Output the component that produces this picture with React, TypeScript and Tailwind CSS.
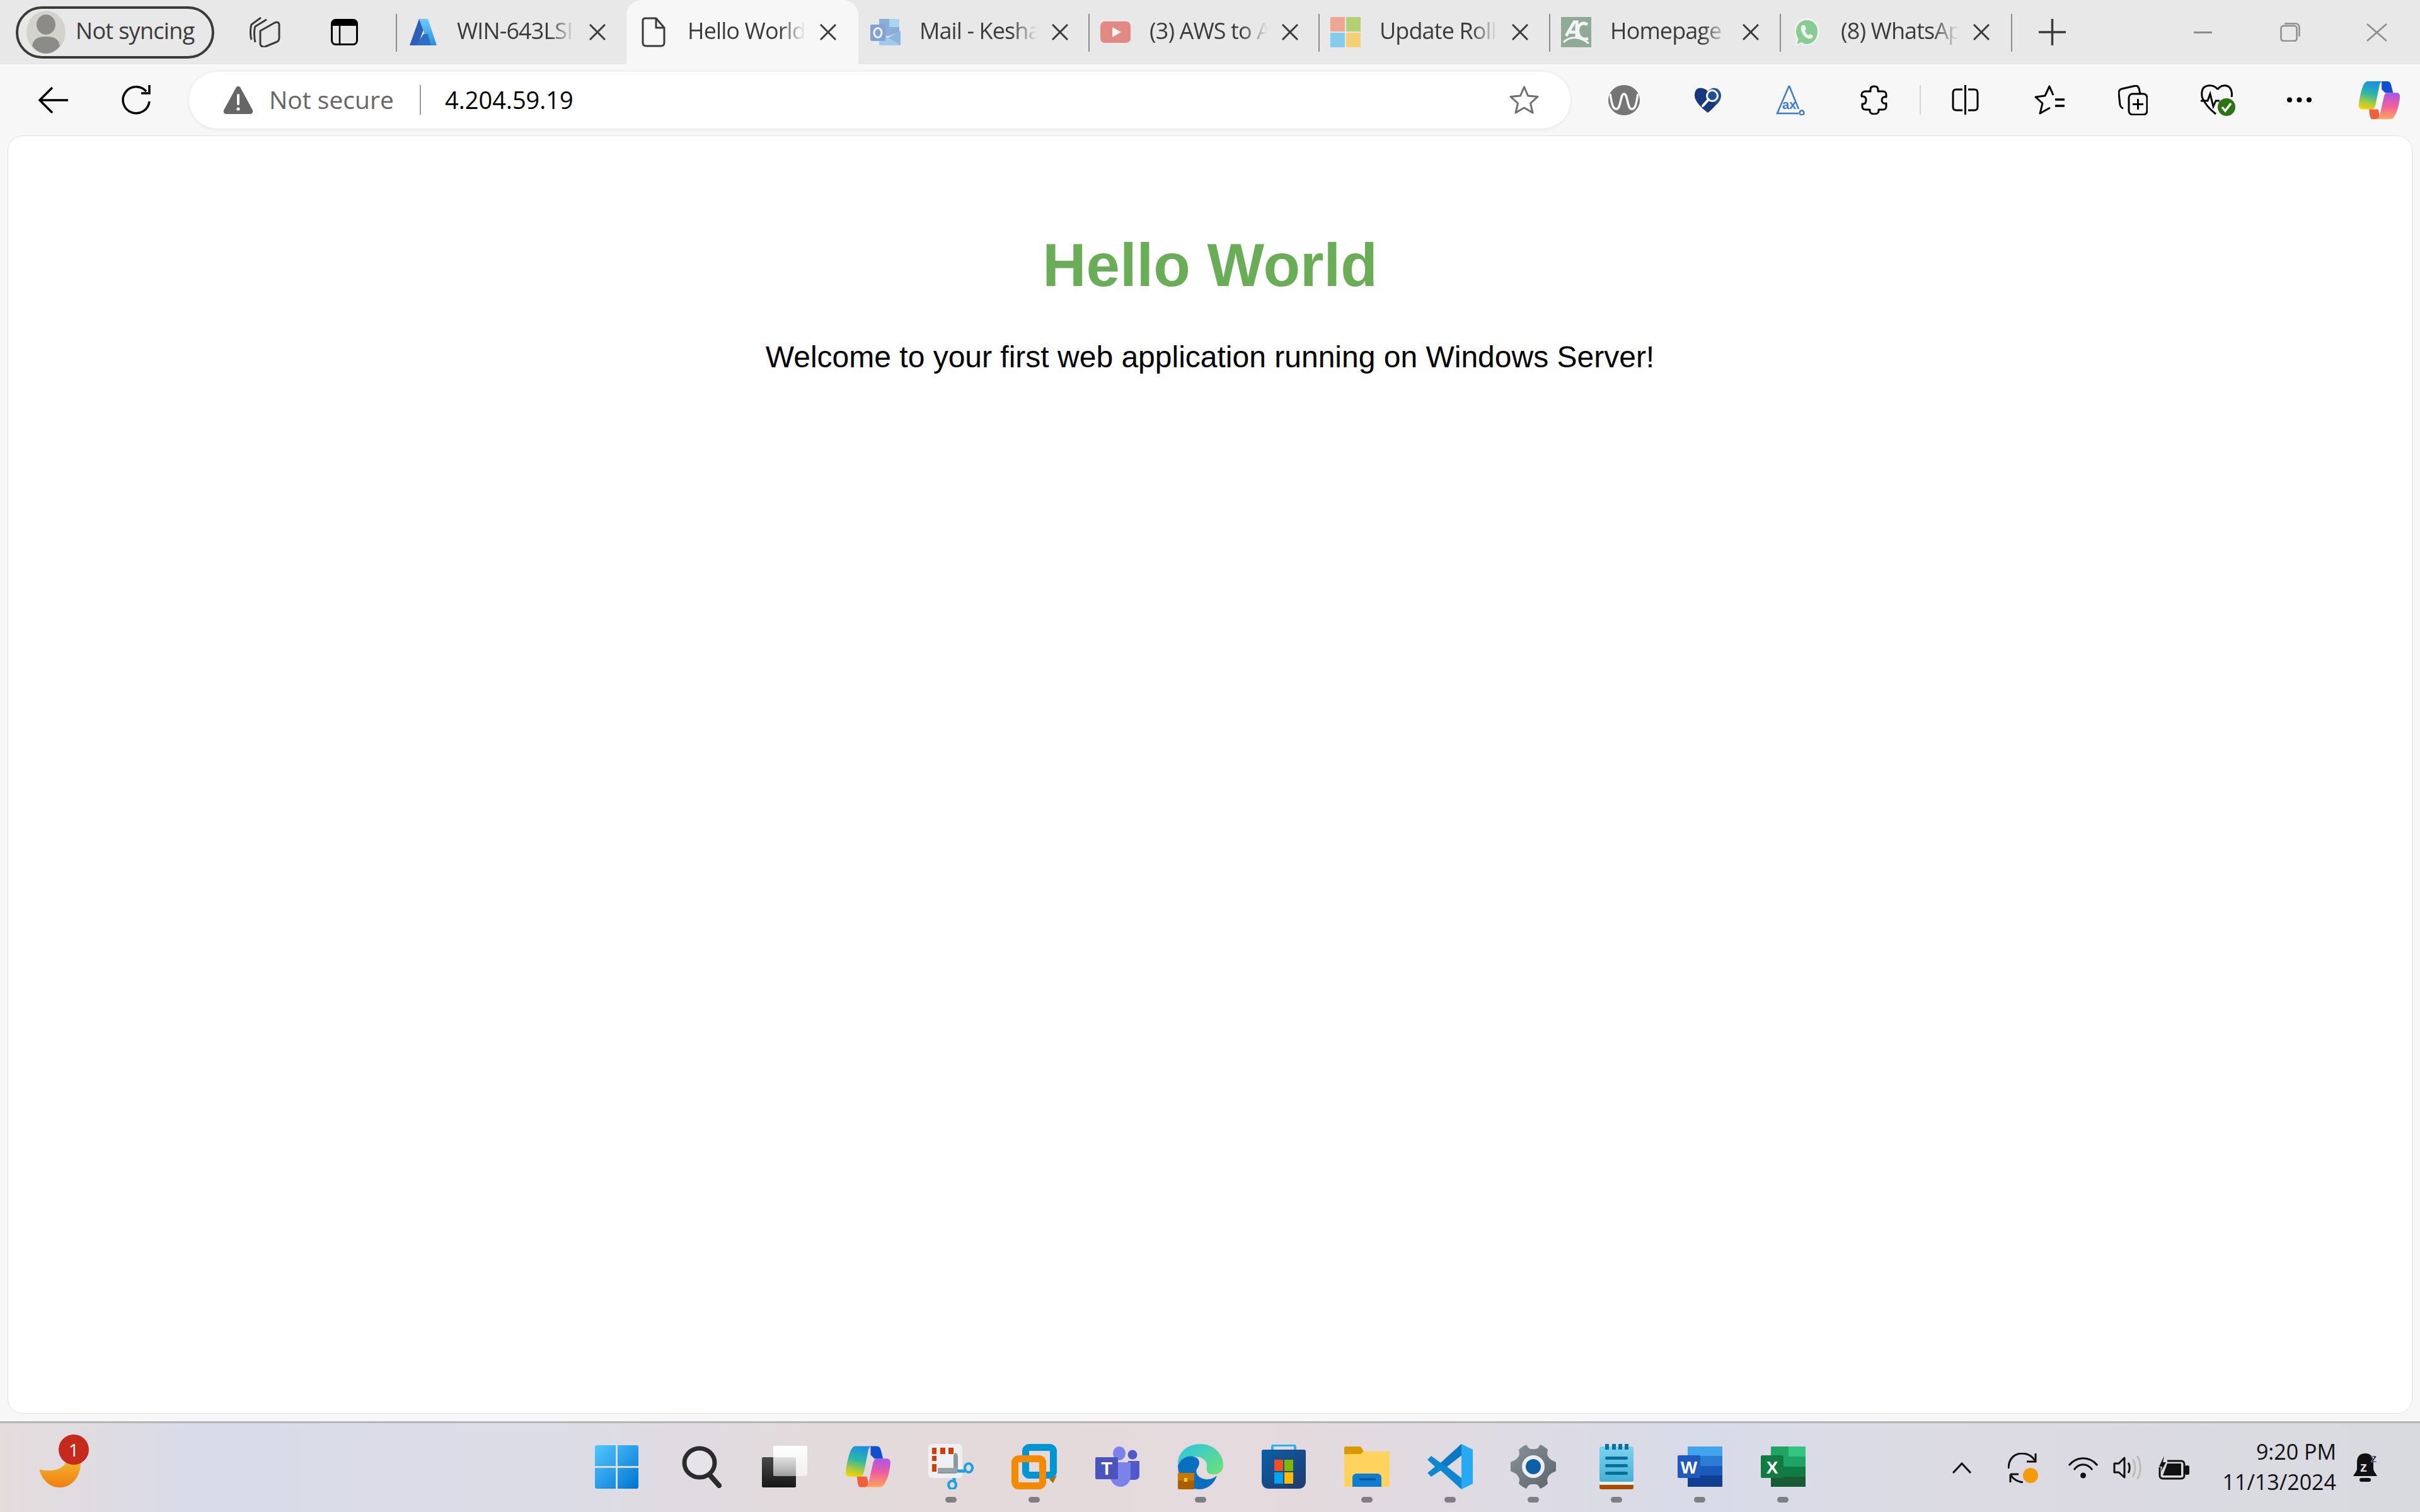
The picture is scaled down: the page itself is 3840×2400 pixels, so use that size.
const ui = "font-['Open_Sans',sans-serif]";

const Avatar = () => (
  <svg viewBox="0 0 64 68" className="w-[64px] h-[68px]">
    <ellipse cx="32" cy="34" rx="31" ry="34" fill="#d3d2cd" />
    <ellipse cx="32" cy="22" rx="15" ry="16" fill="#8b8b88" />
    <path d="M10 56C12 44 20 41 32 41S52 44 54 56C48 64 40 68 32 68S16 64 10 56Z" fill="#8b8b88" />
  </svg>
);

const Workspaces = () => (
  <svg viewBox="0 0 49 48" fill="none" stroke="#3b3b3b" strokeWidth="3" strokeLinejoin="round" className="w-[49px] h-[48px] shrink-0">
    <path d="M3 36C1 30 1 18 3 12L18 1" />
    <path d="M9 40C7 32 7 20 9 15L27 4" />
    <path d="M17 22L40 9C45 7 47 9 47 13V33C47 37 45 39 42 40L25 47C20 48 17 46 17 42Z" />
  </svg>
);

const VerticalTabs = () => (
  <svg viewBox="0 0 43 42" className="w-[43px] h-[42px] shrink-0">
    <rect x="1.5" y="1.5" width="40" height="39" rx="6" fill="#fff" fillOpacity="0" stroke="#000" strokeWidth="3" />
    <path d="M2 8C2 3 4 1 8 1H35C39 1 41 3 41 8V11H2Z" fill="#000" />
    <path d="M14 11V40" stroke="#000" strokeWidth="2.5" />
  </svg>
);

const Azure = () => (
  <svg viewBox="0 0 48 48" className="w-[48px] h-[48px]">
    <defs>
      <linearGradient id="az" x1="0" y1="0" x2="0" y2="1">
        <stop offset="0" stopColor="#6ecbf8" />
        <stop offset="1" stopColor="#2a8fdc" />
      </linearGradient>
    </defs>
    <path d="M18 3H31L16 45H3Z" fill="#2d5fb8" />
    <path d="M18 3H32L46 45H33Z" fill="url(#az)" />
    <path d="M25 27L13 45H37L32 27Z" fill="#2b6fc7" />
  </svg>
);

const Doc = () => (
  <svg viewBox="0 0 38 48" fill="none" stroke="#3b3b3b" strokeWidth="3" strokeLinejoin="round" className="w-[38px] h-[48px]">
    <path d="M6 2H23L36 17V41C36 44 34 46 31 46H7C4 46 2 44 2 41V6C2 3 3 2 6 2Z" />
    <path d="M23 2V17H36" />
  </svg>
);

const Outlook = () => (
  <svg viewBox="0 0 48 48" className="w-[48px] h-[48px] opacity-50">
    <path d="M14 3H46V24L30 30H14Z" fill="#2f78c8" />
    <path d="M30 3H46V16H30Z" fill="#6cc6f0" />
    <path d="M14 24L48 45H14Z" fill="#5aaee8" />
    <path d="M48 22V45L28 33Z" fill="#2f88d8" />
    <rect x="0" y="12" width="24" height="26" rx="2" fill="#1f5fc0" />
    <ellipse cx="12" cy="25" rx="6" ry="7.5" fill="none" stroke="#fff" strokeWidth="3" />
  </svg>
);

const YouTube = () => (
  <svg viewBox="0 0 48 34" className="w-[48px] h-[34px] opacity-50">
    <rect width="48" height="34" rx="7" fill="#dd2c21" />
    <path d="M19 9L33 17L19 25Z" fill="#fff" />
  </svg>
);

const MsLogo = () => (
  <svg viewBox="0 0 48 48" className="w-[48px] h-[48px] opacity-50">
    <rect width="23" height="23" fill="#f25022" fillOpacity=".85" />
    <rect x="25" width="23" height="23" fill="#7fba00" />
    <rect y="25" width="23" height="23" fill="#00a4ef" fillOpacity=".85" />
    <rect x="25" y="25" width="23" height="23" fill="#ffb900" />
  </svg>
);

const AcLogo = () => (
  <svg viewBox="0 0 48 48" className="w-[48px] h-[48px] opacity-50">
    <rect width="48" height="48" fill="#38704b" />
    <path d="M8 30L21 8H25V34M14 24H25" fill="none" stroke="#fff" strokeWidth="5" />
    <path d="M42 12C33 6 25 14 27 25C29 34 36 37 43 34" fill="none" stroke="#fff" strokeWidth="5" />
    <path d="M4 40C14 30 30 30 44 42" fill="none" stroke="#fff" strokeWidth="3" />
  </svg>
);

const WhatsApp = () => (
  <svg viewBox="0 0 42 48" className="w-[42px] h-[48px] opacity-50">
    <path d="M21 2C10 2 2 11 2 23C2 28 3 32 5 35L1 46L12 42C15 44 18 45 21 45C32 45 41 35 41 23S32 2 21 2Z" fill="#fff" />
    <path d="M21 5C11 5 4 13 4 23C4 28 6 32 8 35L5 43L13 40C15 42 18 43 21 43C31 43 38 34 38 23S31 5 21 5Z" fill="#25b33c" />
    <path d="M14 13C11 15 11 20 14 26C18 33 24 36 28 34C31 33 31 30 30 29L26 27L24 29C21 28 19 25 18 21L20 19L18 13Z" fill="#fff" />
  </svg>
);

const CloseX = () => (
  <svg viewBox="0 0 26 26" fill="none" stroke="#3b3b3b" strokeWidth="3" className="w-[26px] h-[26px] shrink-0">
    <path d="M1 1L25 25M25 1L1 25" />
  </svg>
);

const tabs = [
  { title: "WIN-643LSI", icon: <Azure />, width: "w-[366px]", sep: true },
  { title: "Hello World", icon: <Doc />, width: "w-[368px]", active: true },
  { title: "Mail - Kesha", icon: <Outlook />, width: "w-[365px]" },
  { title: "(3) AWS to A", icon: <YouTube />, width: "w-[365px]", sep: true },
  { title: "Update Roll", icon: <MsLogo />, width: "w-[366px]", sep: true },
  { title: "Homepage", icon: <AcLogo />, width: "w-[366px]", sep: true },
  { title: "(8) WhatsAp", icon: <WhatsApp />, width: "w-[367px]", sep: true },
];

const Tab = ({ title, icon, width, active, sep }: { title: string; icon: React.ReactNode; width: string; active?: boolean; sep?: boolean }) => (
  <div className={`${width} h-[102px] shrink-0 relative flex items-center pl-[19px] ${active ? "bg-[#f7f7f7] rounded-t-[24px]" : ""}`}>
    {sep && <div className="absolute left-0 top-[22px] w-[2px] h-[60px] bg-[#8d8d8d]" />}
    <div className="w-[48px] flex justify-center shrink-0">{icon}</div>
    <div className="ml-[30px] w-[187px] pb-[4px] overflow-hidden whitespace-nowrap text-[36px] leading-[48px] text-[#3b3b3b] tracking-[-0.9px] [mask-image:linear-gradient(to_right,black_78%,transparent_100%)]">
      {title}
    </div>
    <div className="ml-[23px]">
      <CloseX />
    </div>
  </div>
);

const TabBar = () => (
  <div className="h-[102px] bg-[#e8e8e8] flex items-center shrink-0">
    <div className="ml-[25px] w-[315px] h-[83px] rounded-full border-[4px] border-[#3b3b3b] flex items-center pl-[12px] shrink-0">
      <Avatar />
      <span className="ml-[15px] pb-[4px] text-[36px] text-[#3b3b3b] whitespace-nowrap tracking-[-0.7px]">Not syncing</span>
    </div>
    <div className="ml-[56px] shrink-0"><Workspaces /></div>
    <div className="ml-[80px] shrink-0"><VerticalTabs /></div>
    <div className="ml-[60px] flex relative shrink-0">
      {tabs.map((t) => (
        <Tab key={t.title} {...t} />
      ))}
      <div className="w-[2px] h-[60px] mt-[22px] bg-[#8d8d8d] shrink-0" />
    </div>
    <svg viewBox="0 0 43 42" stroke="#3b3b3b" strokeWidth="3.5" className="ml-[42px] w-[43px] h-[42px] shrink-0">
      <path d="M21.5 0V42M0 21H43" />
    </svg>
    <div className="ml-[203px] w-[29px] h-[3px] bg-[#8c8c8c] shrink-0" />
    <svg viewBox="0 0 32 30" fill="none" stroke="#8c8c8c" strokeWidth="2.5" className="ml-[108px] w-[32px] h-[30px] shrink-0">
      <rect x="1.5" y="5" width="25" height="24" rx="4" />
      <path d="M7 1.5H25C28 1.5 30.5 4 30.5 7V22" />
    </svg>
    <svg viewBox="0 0 33 29" fill="none" stroke="#8c8c8c" strokeWidth="2.5" className="ml-[105px] w-[33px] h-[29px] shrink-0">
      <path d="M1 1L32 28M32 1L1 28" />
    </svg>
  </div>
);

const Warning = () => (
  <svg viewBox="0 0 48 45" className="w-[48px] h-[45px] shrink-0">
    <path d="M24 1C22 1 21 2 20 4L1 39C0 42 2 45 5 45H43C46 45 48 42 47 39L28 4C27 2 26 1 24 1Z" fill="#666" />
    <rect x="22" y="13" width="4" height="18" rx="2" fill="#fff" />
    <circle cx="24" cy="37" r="2.6" fill="#fff" />
  </svg>
);

const StarOutline = () => (
  <svg viewBox="0 0 47 45" fill="none" stroke="#6f6f6f" strokeWidth="3" strokeLinejoin="round" className="w-[47px] h-[45px] shrink-0">
    <path d="M23.5 2L29.5 16L45 17.5L33.5 28L37 43L23.5 35L10 43L13.5 28L2 17.5L17.5 16Z" />
  </svg>
);

const NavBar = () => (
  <div className="h-[113px] bg-[#f7f7f7] flex items-center shrink-0">
    <svg viewBox="0 0 48 42" fill="none" stroke="#000" strokeWidth="3.5" className="ml-[60px] w-[48px] h-[42px] shrink-0">
      <path d="M23 1L3 21L23 41M3 21H48" />
    </svg>
    <svg viewBox="0 0 48 48" fill="none" stroke="#000" strokeWidth="3.5" className="ml-[84px] w-[48px] h-[48px] shrink-0">
      <path d="M40 10A21 21 0 1 0 45 26" />
      <path d="M45 0V13H32" />
    </svg>
    <div className="ml-[60px] w-[2192px] h-[90px] rounded-[45px] bg-white shadow-[0_1px_6px_rgba(0,0,0,0.08)] flex items-center pl-[54px] pr-[50px] shrink-0">
      <Warning />
      <span className="ml-[25px] w-[239px] text-[39px] text-[#666] whitespace-nowrap">Not secure</span>
      <div className="w-[2px] h-[47px] bg-[#9a9a9a]" />
      <span className="ml-[38px] text-[38px] text-black whitespace-nowrap">4.204.59.19</span>
      <div className="ml-auto"><StarOutline /></div>
    </div>

    <svg viewBox="0 0 50 48" className="ml-[60px] w-[50px] h-[48px] shrink-0">
      <ellipse cx="25" cy="24" rx="25" ry="24" fill="#757575" />
      <path d="M3 14C6 34 8 38 13 38C20 38 19 14 25 14C31 14 30 38 37 38C42 38 44 34 47 14" fill="none" stroke="#f7f7f7" strokeWidth="3.5" />
    </svg>
    <svg viewBox="0 0 42 40" className="ml-[87px] w-[42px] h-[40px] shrink-0">
      <path d="M21 6C17 1 11 0 6 1C1 3 0 8 0 13C0 21 10 32 21 40C26 36 31 31 35 26L23 14Z" fill="#15397a" />
      <path d="M21 6C24 2 29 0 33 1C39 2 42 8 42 13C42 18 39 23 35 27L21 14Z" fill="#1f4f96" />
      <ellipse cx="28" cy="13" rx="8.5" ry="8.5" fill="#1f4f96" stroke="#fff" strokeWidth="3" />
      <path d="M22 19L13 29" stroke="#fff" strokeWidth="4" strokeLinecap="round" />
    </svg>
    <svg viewBox="0 0 47 48" fill="none" stroke="#3a7bd5" strokeWidth="2.5" className="ml-[87px] w-[47px] h-[48px] shrink-0">
      <path d="M21 1L2 45H36" />
      <path d="M21 1L36 38" />
      <circle cx="41" cy="44" r="3.5" />
      <text x="10" y="38" fontSize="20" fontWeight="700" fill="#3a7bd5" stroke="none" fontFamily="'Liberation Sans',sans-serif">ax</text>
    </svg>
    <svg viewBox="0 0 43 47" fill="none" stroke="#000" strokeWidth="3" strokeLinejoin="round" className="ml-[87px] w-[43px] h-[47px] shrink-0">
      <path d="M16 7C16 4 18 2 22 2S28 4 28 7V10H36C39 10 41 12 41 15V19C37 18 34 20 34 24S37 30 41 29V34C41 37 39 39 36 39H29V41C29 44 26 46 22 46S15 44 15 41V39H8C5 39 3 37 3 34V30H4C7 30 9 28 9 24S7 18 4 18H2V15C2 12 5 10 8 10H16Z" />
    </svg>
    <div className="ml-[51px] w-[2px] h-[47px] bg-[#d4d4d4] shrink-0" />
    <svg viewBox="0 0 43 47" fill="none" stroke="#000" strokeWidth="3" className="ml-[49px] w-[43px] h-[47px] shrink-0">
      <path d="M21.5 0V47" />
      <path d="M17 7H7C4 7 2 9 2 12V35C2 38 4 40 7 40H17M26 7H36C39 7 41 9 41 12V35C41 38 39 40 36 40H26" />
    </svg>
    <svg viewBox="0 0 48 47" fill="none" stroke="#000" strokeWidth="3" strokeLinejoin="round" className="ml-[88px] w-[48px] h-[47px] shrink-0">
      <path d="M30 16L24 2L17 17L2 19L13 29L9 45L25 36" />
      <path d="M33 23H48M33 33H48" strokeWidth="3.5" />
    </svg>
    <svg viewBox="0 0 47 48" fill="none" stroke="#000" strokeWidth="3" strokeLinejoin="round" className="ml-[85px] w-[47px] h-[48px] shrink-0">
      <path d="M8 37C5 36 4 35 3 31L1 13C1 9 2 7 6 6L28 1C31 1 32 3 33 5L35 14" />
      <rect x="17" y="14" width="29" height="33" rx="6" />
      <path d="M31.5 22V39M23 30.5H40" />
    </svg>
    <svg viewBox="0 0 55 50" fill="none" className="ml-[84px] w-[55px] h-[50px] shrink-0">
      <path d="M27 8C22 1 12 0 6 4C1 8 1 17 3 22C7 31 15 40 24 47M27 8C31 1 41 0 46 5C49 9 50 15 49 20" stroke="#000" strokeWidth="3" />
      <path d="M0 26H11L15 15L20 35L24 26H30" stroke="#000" strokeWidth="3" />
      <ellipse cx="41" cy="36" rx="14" ry="14" fill="#2b7612" />
      <path d="M34 36L39 42L48 30" stroke="#fff" strokeWidth="3.5" />
    </svg>
    <svg viewBox="0 0 39 9" className="ml-[82px] w-[39px] h-[9px] shrink-0" fill="#000">
      <circle cx="4" cy="4.5" r="4" /><circle cx="19.5" cy="4.5" r="4" /><circle cx="35" cy="4.5" r="4" />
    </svg>
    <div className="ml-[74px] shrink-0"><Copilot cls="w-[67px] h-[60px]" id="c1" /></div>
  </div>
);

const Copilot = ({ cls, id }: { cls: string; id: string }) => (
  <svg viewBox="0 0 72 66" className={cls}>
    <defs>
      <linearGradient id={`${id}a`} x1="0.5" y1="0" x2="0.3" y2="1">
        <stop offset="0" stopColor="#1b8fe8" />
        <stop offset="0.45" stopColor="#2fb8a0" />
        <stop offset="0.8" stopColor="#b7cc35" />
        <stop offset="1" stopColor="#f3d400" />
      </linearGradient>
      <linearGradient id={`${id}b`} x1="0.5" y1="0" x2="0.5" y2="1">
        <stop offset="0" stopColor="#a855e8" />
        <stop offset="0.5" stopColor="#ee5f9e" />
        <stop offset="1" stopColor="#ffa65c" />
      </linearGradient>
    </defs>
    <path d="M40 0H50C54 0 56 3 57 8L60 20H46L40 14Z" fill="#0f4fd0" />
    <path d="M16 0H42C38 0 37 4 36 8L30 38C29 44 27 49 24 49H6C2 49 0 46 0 41C1 30 5 12 9 5C11 2 13 0 16 0Z" fill={`url(#${id}a)`} />
    <path d="M18 49H34L36 58C37 63 34 66 30 66H24C21 66 20 63 19 58Z" fill="#f0603c" />
    <path d="M50 20H66C70 20 72 23 72 27C71 38 68 52 63 60C61 64 58 66 55 66H30C34 66 36 62 37 58L44 27C45 23 47 20 50 20Z" fill={`url(#${id}b)`} />
  </svg>
);

const Start = () => (
  <svg viewBox="0 0 69 69" className="w-[69px] h-[69px] -ml-[6px]">
    <defs>
      <linearGradient id="st" x1="0" y1="0" x2="1" y2="1">
        <stop offset="0" stopColor="#52c8ff" />
        <stop offset="1" stopColor="#0073d1" />
      </linearGradient>
    </defs>
    <path d="M3 0H33V33H0V3C0 1 1 0 3 0ZM36 0H66C68 0 69 1 69 3V33H36ZM0 36H33V69H3C1 69 0 68 0 66ZM36 36H69V66C69 68 68 69 66 69H36Z" fill="url(#st)" />
  </svg>
);

const Search = () => (
  <svg viewBox="0 0 63 67" fill="none" stroke="#2b2b2b" className="w-[63px] h-[67px]">
    <ellipse cx="28" cy="27" rx="24" ry="23" strokeWidth="7" fill="#e6e4e8" />
    <path d="M44 46L59 63" strokeWidth="8" strokeLinecap="round" />
  </svg>
);

const TaskView = () => (
  <svg viewBox="0 0 72 66" className="w-[72px] h-[66px]">
    <defs>
      <linearGradient id="tv" x1="0" y1="0" x2="0" y2="1"><stop offset="0" stopColor="#4a4a4a" /><stop offset="1" stopColor="#161616" /></linearGradient>
      <linearGradient id="tw" x1="0" y1="0" x2="0" y2="1"><stop offset="0" stopColor="#fff" /><stop offset="1" stopColor="#fff" stopOpacity=".55" /></linearGradient>
    </defs>
    <rect y="18" width="54" height="48" rx="2" fill="url(#tv)" />
    <rect x="18" width="54" height="48" rx="2" fill="url(#tw)" />
  </svg>
);

const Snip = () => (
  <svg viewBox="0 0 72 72" className="w-[72px] h-[72px]">
    <rect width="54" height="54" rx="6" fill="#eef0f2" />
    <path d="M6 6H13V16H6ZM19 6H27V16H19ZM32 6H40V16H32ZM6 19H13V27H6ZM6 32H13V44H6Z" fill="#d83b01" />
    <path d="M42 14C45 14 47 17 47 20V42C47 45 45 47 42 47H15V42H38C40 42 40 40 40 38V18Z" fill="#8f979e" />
    <rect x="15" y="38" width="32" height="7" fill="#9aa2a9" />
    <ellipse cx="64" cy="38" rx="6" ry="7" fill="none" stroke="#1ba1e2" strokeWidth="4" />
    <path d="M46 43H58" stroke="#1ba1e2" strokeWidth="5" />
    <ellipse cx="38" cy="65" rx="6" ry="6.5" fill="none" stroke="#1ba1e2" strokeWidth="4" />
    <path d="M41 54V60" stroke="#1ba1e2" strokeWidth="5" />
  </svg>
);

const VMware = () => (
  <svg viewBox="0 0 72 72" fill="none" className="w-[72px] h-[72px]">
    <rect x="22.5" y="5.5" width="44" height="44" rx="6" stroke="#0095d3" strokeWidth="11" />
    <path d="M60 56L72 50L66 62Z" fill="#b46a00" />
    <rect x="5.5" y="23.5" width="44" height="43" rx="6" stroke="#f38b00" strokeWidth="11" />
  </svg>
);

const Teams = () => (
  <svg viewBox="0 0 70 64" className="w-[70px] h-[64px]">
    <circle cx="59" cy="13" r="7.5" fill="#5059c9" />
    <path d="M52 23H70V46C70 51 66 53 62 53H52Z" fill="#5059c9" />
    <ellipse cx="38" cy="11" rx="10" ry="11" fill="#7b83eb" />
    <path d="M24 25H56V48C56 57 48 64 40 64S24 57 24 48Z" fill="#7b83eb" />
    <rect y="17" width="36" height="35" rx="2" fill="#4b53bc" />
    <text x="18" y="45" textAnchor="middle" fontSize="29" fontWeight="700" fill="#fff" fontFamily="'Liberation Sans',sans-serif">T</text>
  </svg>
);

const Edge = () => (
  <svg viewBox="0 0 72 72" className="w-[72px] h-[72px]">
    <defs>
      <linearGradient id="eg" x1="0" y1="0" x2="1" y2="1"><stop offset="0" stopColor="#2bc4e8" /><stop offset="1" stopColor="#6ee36f" /></linearGradient>
    </defs>
    <path d="M0 32C0 12 16 0 36 0C56 0 72 15 72 34C72 46 62 50 52 48C44 46 46 40 46 34C46 26 38 20 26 20C12 20 2 28 0 32Z" fill="url(#eg)" />
    <path d="M0 34C4 24 14 18 24 20C36 22 36 32 30 40C28 44 30 54 44 56C50 57 58 54 62 50C58 64 46 72 34 72C16 72 0 56 0 34Z" fill="#0b6fbf" />
    <path d="M0 46H26V72H2C1 72 0 71 0 70Z" fill="#a85f00" />
    <path d="M0 46H26V58H0Z" fill="#c77700" />
    <rect x="10" y="54" width="5" height="6" fill="#ffd21f" />
  </svg>
);

const Store = () => (
  <svg viewBox="0 0 70 70" className="w-[70px] h-[70px]">
    <defs>
      <linearGradient id="sb" x1="0" y1="0" x2="1" y2="1"><stop offset="0" stopColor="#0b5fa8" /><stop offset="1" stopColor="#213a6b" /></linearGradient>
    </defs>
    <path d="M17 16V4C17 2 18 1 20 1H50C52 1 53 2 53 4V16" fill="none" stroke="#27b5f0" strokeWidth="4" />
    <path d="M3 8H67C69 8 70 9 70 11V58C70 65 66 70 59 70H11C4 70 0 65 0 58V11C0 9 1 8 3 8Z" fill="url(#sb)" />
    <rect x="20" y="24" width="14" height="18" fill="#f25022" />
    <rect x="36" y="24" width="14" height="18" fill="#7fba00" />
    <rect x="20" y="44" width="14" height="18" fill="#00a4ef" />
    <rect x="36" y="44" width="14" height="18" fill="#ffb900" />
  </svg>
);

const Explorer = () => (
  <svg viewBox="0 0 72 64" className="w-[72px] h-[64px]">
    <path d="M2 0H24C26 0 27 1 28 3L31 8H70C71 8 72 9 72 10V20H0V2C0 1 1 0 2 0Z" fill="#d99c00" />
    <path d="M0 12H26L30 8H70C71 8 72 9 72 10V62C72 63 71 64 70 64H2C1 64 0 63 0 62Z" fill="#ffd35c" />
    <path d="M13 64V50C13 45 16 43 20 43H52C56 43 59 45 59 50V64Z" fill="#0f7dd0" />
    <path d="M24 52H50" stroke="#0a4f8f" strokeWidth="3" />
  </svg>
);

const VSCode = () => (
  <svg viewBox="0 0 72 72" className="w-[72px] h-[72px]">
    <path d="M54 0L54 18L31 36L54 54L54 72L21 42L6 52L0 46L12 36L0 25L6 19L21 30Z" fill="#0f86d0" />
    <path d="M54 0L72 9V63L54 72V54V18Z" fill="#27a9f3" />
    <path d="M54 0V18L31 36L21 30Z" fill="#0a78c2" />
  </svg>
);

const Settings = () => (
  <svg viewBox="0 0 72 70" className="w-[72px] h-[70px]">
    <defs>
      <linearGradient id="gr" x1="0" y1="0" x2="1" y2="1"><stop offset="0" stopColor="#8a9299" /><stop offset="1" stopColor="#5b646b" /></linearGradient>
    </defs>
    <path d="M25 0L28 5C31 8 41 8 44 5L47 0C52 2 56 5 59 8L58 14C58 18 62 24 68 26L72 28V42L68 44C62 46 58 52 58 56L59 62C56 65 52 68 47 70L44 65C41 62 31 62 28 65L25 70C20 68 16 65 13 62L14 56C14 52 10 46 4 44L0 42V28L4 26C10 24 14 18 14 14L13 8C16 5 20 2 25 0Z" fill="url(#gr)" />
    <ellipse cx="36" cy="35" rx="18" ry="18" fill="#eceff2" />
    <ellipse cx="36" cy="35" rx="12" ry="12" fill="#0f5fa8" />
  </svg>
);

const Notepad = () => (
  <svg viewBox="0 0 54 72" className="w-[54px] h-[72px]">
    <defs>
      <linearGradient id="np" x1="0" y1="0" x2="0" y2="1"><stop offset="0" stopColor="#7dd3ef" /><stop offset="1" stopColor="#45b0d3" /></linearGradient>
    </defs>
    <rect y="4" width="54" height="56" rx="3" fill="url(#np)" />
    <path d="M0 60H54V64H0Z" fill="#f1efeb" />
    <path d="M0 65H54V69C54 71 53 72 51 72H3C1 72 0 71 0 69Z" fill="#a64d00" />
    <path d="M9 0H15V9H9ZM20 0H26V9H20ZM30 0H36V9H30ZM40 0H46V9H40Z" fill="#08709b" />
    <rect x="9" y="20" width="36" height="5" rx="2.5" fill="#08709b" />
    <rect x="9" y="32" width="36" height="5" rx="2.5" fill="#08709b" />
    <rect x="9" y="44" width="36" height="5" rx="2.5" fill="#08709b" />
  </svg>
);

const Word = () => (
  <svg viewBox="0 0 71 64" className="w-[71px] h-[64px]">
    <rect x="16" width="55" height="15" fill="#41a5ee" />
    <rect x="16" y="15" width="55" height="16" fill="#2b7cd3" />
    <rect x="16" y="31" width="55" height="15" fill="#185abd" />
    <rect x="16" y="46" width="55" height="18" fill="#103f91" />
    <rect y="14" width="36" height="36" rx="2" fill="#1f5bbf" />
    <text x="18" y="43" textAnchor="middle" fontSize="28" fontWeight="700" fill="#fff" fontFamily="'Liberation Sans',sans-serif">W</text>
  </svg>
);

const Excel = () => (
  <svg viewBox="0 0 71 64" className="w-[71px] h-[64px]">
    <rect x="16" width="28" height="32" fill="#21a366" />
    <rect x="44" width="27" height="16" fill="#33c481" />
    <rect x="44" y="16" width="27" height="16" fill="#21a366" />
    <rect x="16" y="32" width="55" height="16" fill="#107c41" />
    <rect x="16" y="48" width="55" height="16" fill="#185c37" />
    <rect y="14" width="36" height="36" rx="2" fill="#107c41" />
    <text x="18" y="43" textAnchor="middle" fontSize="28" fontWeight="700" fill="#fff" fontFamily="'Liberation Sans',sans-serif">X</text>
  </svg>
);

const pinned = [
  { key: "start", icon: <Start /> },
  { key: "search", icon: <Search /> },
  { key: "task", icon: <TaskView /> },
  { key: "copilot", icon: <Copilot cls="w-[71px] h-[66px]" id="c2" /> },
  { key: "snip", icon: <Snip />, open: true },
  { key: "vmware", icon: <VMware />, open: true },
  { key: "teams", icon: <Teams /> },
  { key: "edge", icon: <Edge />, open: true },
  { key: "store", icon: <Store /> },
  { key: "explorer", icon: <Explorer />, open: true },
  { key: "vscode", icon: <VSCode />, open: true },
  { key: "settings", icon: <Settings />, open: true },
  { key: "notepad", icon: <Notepad />, open: true },
  { key: "word", icon: <Word />, open: true },
  { key: "excel", icon: <Excel />, open: true },
];

const Taskbar = () => (
  <div className="h-[144px] shrink-0 border-t-[3px] border-[#b5b3b6] flex items-start bg-[linear-gradient(90deg,#e5dcdc_0%,#d8dbe8_8%,#dcdce6_23%,#e3dadb_34%,#e5dadd_52%,#d8dbe8_70%,#dcdbe3_81%,#d9d9e0_100%)]">
    <div className="relative ml-[63px] mt-[61px] w-[66px] h-[41px] shrink-0">
      <svg viewBox="0 0 66 41" className="w-[66px] h-[41px]">
        <defs>
          <linearGradient id="cr" x1="0" y1="0" x2="0" y2="1"><stop offset="0" stopColor="#f3b52a" /><stop offset="1" stopColor="#ef7d11" /></linearGradient>
        </defs>
        <path d="M43 0H65C66 22 52 41 32 41C16 41 5 30 0 15C-1 13 1 12 3 13C20 17 37 12 43 0Z" fill="url(#cr)" />
      </svg>
      <div className="absolute left-[30px] top-[-43px] w-[48px] h-[48px] rounded-full bg-[#c42b1c] text-white text-[28px] flex items-center justify-center">1</div>
    </div>
    <div className="ml-[786px] flex shrink-0">
      {pinned.map((p) => (
        <div key={p.key} className="w-[132px] flex flex-col items-center">
          <div className="h-[72px] mt-[33px] flex items-center justify-center">{p.icon}</div>
          {p.open && <div className="mt-[12px] w-[18px] h-[9px] rounded-full bg-[#7f7e82]" />}
        </div>
      ))}
    </div>
    <div className="self-stretch flex items-center shrink-0">
      <svg viewBox="0 0 30 18" fill="none" stroke="#111" strokeWidth="3" className="ml-[203px] w-[30px] h-[18px] shrink-0">
        <path d="M1 17L15 2L29 17" />
      </svg>
      <svg viewBox="0 0 48 48" fill="none" className="ml-[58px] w-[48px] h-[48px] shrink-0">
        <path d="M1 25C1 10 10 1 23 1C32 1 38 5 43 12" stroke="#111" strokeWidth="3" />
        <path d="M44 1V14H30" stroke="#111" strokeWidth="3" />
        <path d="M4 34V47M4 34H17M5 36C9 42 15 46 24 47" stroke="#111" strokeWidth="3" />
        <ellipse cx="36" cy="36" rx="12" ry="12" fill="#f59a08" />
      </svg>
      <svg viewBox="0 0 47 34" fill="none" stroke="#111" strokeWidth="3" className="ml-[48px] w-[47px] h-[34px] shrink-0">
        <path d="M1 13C13 -2 34 -2 46 13" />
        <path d="M9 20C17 9 30 9 38 20" />
        <circle cx="23.5" cy="29" r="4.5" fill="#111" stroke="none" />
      </svg>
      <svg viewBox="0 0 47 37" fill="none" className="ml-[24px] w-[47px] h-[37px] shrink-0">
        <path d="M2 12H9L18 3V34L9 26H2Z" stroke="#111" strokeWidth="3" strokeLinejoin="round" />
        <path d="M24 11C27 15 27 22 24 27" stroke="#111" strokeWidth="3" />
        <path d="M31 5C36 12 36 26 31 33" stroke="#bbb" strokeWidth="3" />
        <path d="M38 0C45 10 45 28 38 37" stroke="#bbb" strokeWidth="3" />
      </svg>
      <svg viewBox="0 0 49 38" fill="none" className="ml-[25px] w-[49px] h-[38px] shrink-0">
        <path d="M14 8H36C39 8 41 10 41 13V31C41 34 39 36 36 36H7C4 36 2 34 2 31V18" stroke="#111" strokeWidth="3" />
        <path d="M14 12H36V31H7Z" fill="#111" />
        <rect x="42" y="15" width="7" height="15" rx="3" fill="#111" />
        <path d="M9 0L1 17H6L4 25L12 10H7Z" fill="#111" />
      </svg>
      <div className="ml-[51px] w-[182px] pb-[4px] shrink-0 flex flex-col items-end text-[34px] leading-[48px] text-[#111] whitespace-nowrap">
        <span>9:20 PM</span>
        <span>11/13/2024</span>
      </div>
      <svg viewBox="0 0 40 45" className="ml-[27px] w-[40px] h-[45px] shrink-0">
        <path d="M19 0C28 0 32 6 32 14V24C32 28 36 32 38 36H0C2 32 6 28 6 24V14C6 6 10 0 19 0Z" fill="#111" />
        <rect x="10" y="39" width="18" height="6" rx="3" fill="#111" />
        <text x="11" y="29" fontSize="22" fontWeight="700" fill="#dcdbe3" fontFamily="'Liberation Sans',sans-serif">z</text>
        <text x="28" y="14" fontSize="19" fontWeight="700" fill="#111" stroke="#dcdbe3" strokeWidth="0.6" fontFamily="'Liberation Sans',sans-serif">z</text>
      </svg>
    </div>
  </div>
);

export default function App() {
  return (
    <div className={`w-[3840px] h-[2400px] flex flex-col overflow-hidden ${ui}`}>
      <TabBar />
      <NavBar />
      <div className="flex-1 bg-[#f7f7f7] px-[12px] pb-[12px]">
        <div className="h-full bg-white rounded-[24px] border border-[#e3e3e3] pt-[157px] text-center font-['Liberation_Sans',Arial,sans-serif]">
          <h1 className="text-[96px] leading-none font-bold text-[#69ae57]">Hello World</h1>
          <p className="mt-[74px] text-[48px] leading-none text-black">Welcome to your first web application running on Windows Server!</p>
        </div>
      </div>
      <Taskbar />
    </div>
  );
}
